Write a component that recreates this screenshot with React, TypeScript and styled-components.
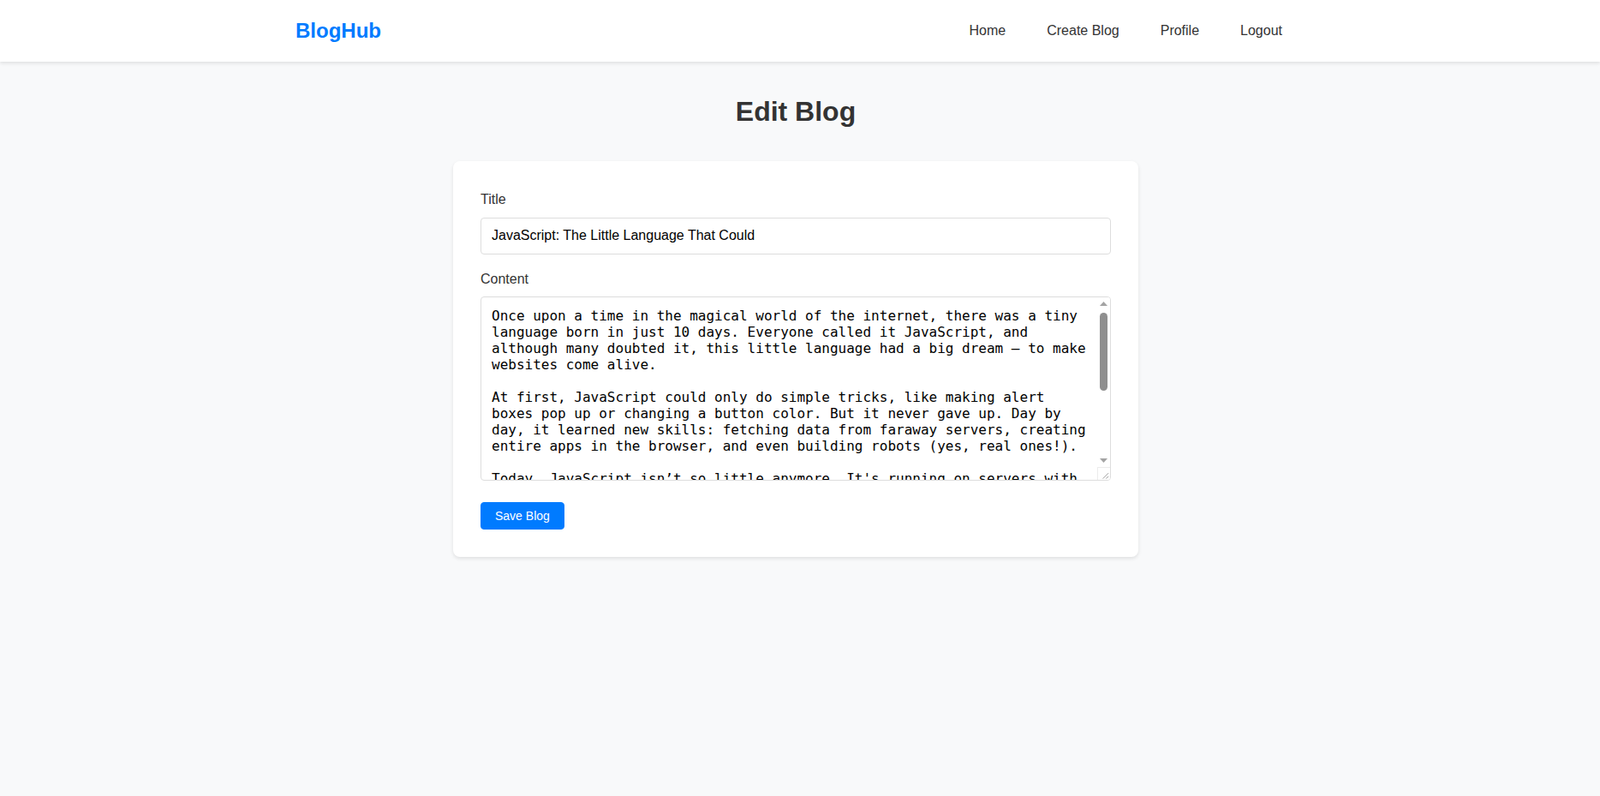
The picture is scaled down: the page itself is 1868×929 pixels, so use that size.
import React, { useState } from 'react'
import { styled, createGlobalStyle } from 'styled-components'

const initialTitle = 'JavaScript: The Little Language That Could'

const initialContent = `Once upon a time in the magical world of the internet, there was a tiny language born in just 10 days. Everyone called it JavaScript, and although many doubted it, this little language had a big dream — to make websites come alive.

At first, JavaScript could only do simple tricks, like making alert boxes pop up or changing a button color. But it never gave up. Day by day, it learned new skills: fetching data from faraway servers, creating entire apps in the browser, and even building robots (yes, real ones!).

Today, JavaScript isn’t so little anymore. It's running on servers with Node.js, powering mobile apps, building games, and even controlling smart homes. The little language that could is now everywhere!

And the best part? It keeps growing, learning, and surprising everyone who thought it was just a toy. The little language that could became the language that does.

The End... or maybe just the beginning.`

const navItems = ['Home', 'Create Blog', 'Profile', 'Logout']

// track is 168px tall, thumb 91px with 3px inset at both ends
const THUMB_TRAVEL = 168 - 91 - 6

const Arrow = ({ up }: { up?: boolean }) => (
  <svg width='9' height='5' viewBox='0 0 9 5'>
    <path d={up ? 'M0 5h9L4.5 0z' : 'M0 0h9L4.5 5z'} fill='#a3a3a3' />
  </svg>
)

const Grip = () => (
  <svg width='15' height='15' viewBox='0 0 15 15'>
    <path d='M13 6L6 13M13 10L10 13' stroke='#9a9a9a' strokeWidth='1' />
  </svg>
)

const App = () => {
  const [title, setTitle] = useState(initialTitle)
  const [content, setContent] = useState(initialContent)
  const [scrollRatio, setScrollRatio] = useState(0)

  const handleScroll = (e: React.UIEvent<HTMLTextAreaElement>) => {
    const { scrollTop, scrollHeight, clientHeight } = e.currentTarget
    const max = scrollHeight - clientHeight
    setScrollRatio(max > 0 ? scrollTop / max : 0)
  }

  return (
    <>
      <GlobalStyle />
      <Navbar>
        <NavInner>
          <Logo href='#'>BlogHub</Logo>
          <NavLinks>
            {navItems.map(item => (
              <NavLink key={item} href='#'>
                {item}
              </NavLink>
            ))}
          </NavLinks>
        </NavInner>
      </Navbar>
      <Main>
        <Heading>Edit Blog</Heading>
        <Card onSubmit={e => e.preventDefault()}>
          <FormGroup $gap={16}>
            <Label htmlFor='title'>Title</Label>
            <Input
              id='title'
              type='text'
              value={title}
              onChange={e => setTitle(e.target.value)}
            />
          </FormGroup>
          <FormGroup $gap={25}>
            <Label htmlFor='content'>Content</Label>
            <TextAreaFrame>
              <TextArea
                id='content'
                value={content}
                onChange={e => setContent(e.target.value)}
                onScroll={handleScroll}
              />
              <ScrollBar>
                <ScrollButton>
                  <Arrow up />
                </ScrollButton>
                <ScrollTrack>
                  <ScrollThumb
                    style={{ transform: `translateY(${scrollRatio * THUMB_TRAVEL}px)` }}
                  />
                </ScrollTrack>
                <ScrollButton>
                  <Arrow />
                </ScrollButton>
                <Resizer>
                  <Grip />
                </Resizer>
              </ScrollBar>
            </TextAreaFrame>
          </FormGroup>
          <SaveButton type='submit'>Save Blog</SaveButton>
        </Card>
      </Main>
    </>
  )
}

const GlobalStyle = createGlobalStyle`
  * {
    box-sizing: border-box;
  }

  body {
    margin: 0;
    font-family: 'Liberation Sans', Arial, sans-serif;
    line-height: 1.6;
    color: #333;
    background: #f8f9fa;
  }
`

const Navbar = styled.nav`
  background: #fff;
  box-shadow: 0 2px 4px rgba(0, 0, 0, 0.1);
  padding-right: 10px;
`

const NavInner = styled.div`
  max-width: 1200px;
  height: 72px;
  margin: 0 auto;
  padding: 0 1rem;
  display: flex;
  align-items: center;
  justify-content: space-between;
`

const Logo = styled.a`
  font-size: 24px;
  font-weight: 700;
  color: #007bff;
  text-decoration: none;
`

const NavLinks = styled.div`
  display: flex;
  gap: 1rem;
`

const NavLink = styled.a`
  padding: 0.5rem 1rem;
  font-size: 16px;
  color: #333;
  text-decoration: none;
`

const Main = styled.main`
  padding: 33px 10px 32px 0;
`

const Heading = styled.h1`
  margin: 0 0 32px;
  text-align: center;
  font-size: 32px;
  color: #333;
`

const Card = styled.form`
  max-width: 800px;
  margin: 0 auto;
  padding: 2rem;
  background: #fff;
  border-radius: 8px;
  box-shadow: 0 2px 4px rgba(0, 0, 0, 0.1);
`

const FormGroup = styled.div<{ $gap: number }>`
  margin-bottom: ${props => props.$gap}px;
`

const Label = styled.label`
  display: block;
  margin-bottom: 0.5rem;
  font-size: 16px;
  color: #333;
`

const Input = styled.input`
  display: block;
  width: 100%;
  padding: 11.5px 12px;
  border: 1px solid #ddd;
  border-radius: 4px;
  font-family: inherit;
  font-size: 16px;
  line-height: normal;
  color: #000;
`

const TextAreaFrame = styled.div`
  display: flex;
  height: 215px;
  border: 1px solid #ddd;
  border-radius: 4px;
  overflow: hidden;
  background: #fff;
`

const TextArea = styled.textarea`
  flex: 1;
  min-width: 0;
  padding: 12px;
  border: none;
  outline: none;
  resize: none;
  font-family: 'DejaVu Sans Mono', monospace;
  font-size: 16px;
  line-height: normal;
  color: #000;
  background: transparent;

  &::-webkit-scrollbar {
    display: none;
  }
`

const ScrollBar = styled.div`
  width: 15px;
  display: flex;
  flex-direction: column;
  background: #fff;
`

const ScrollButton = styled.div`
  height: 15px;
  display: flex;
  align-items: center;
  justify-content: center;
`

const ScrollTrack = styled.div`
  flex: 1;
  padding: 3px 3px;
`

const ScrollThumb = styled.div`
  height: 91px;
  border-radius: 5px;
  background: #8f8f8f;
`

const Resizer = styled.div`
  height: 15px;
  display: flex;
  border-top: 1px solid #ececec;
  border-left: 1px solid #ececec;
`

const SaveButton = styled.button`
  padding: 7px 16px;
  background: #007bff;
  border: 1px solid #007bff;
  border-radius: 4px;
  font-family: inherit;
  font-size: 14px;
  line-height: normal;
  color: #fff;
  cursor: pointer;
`

export default App
